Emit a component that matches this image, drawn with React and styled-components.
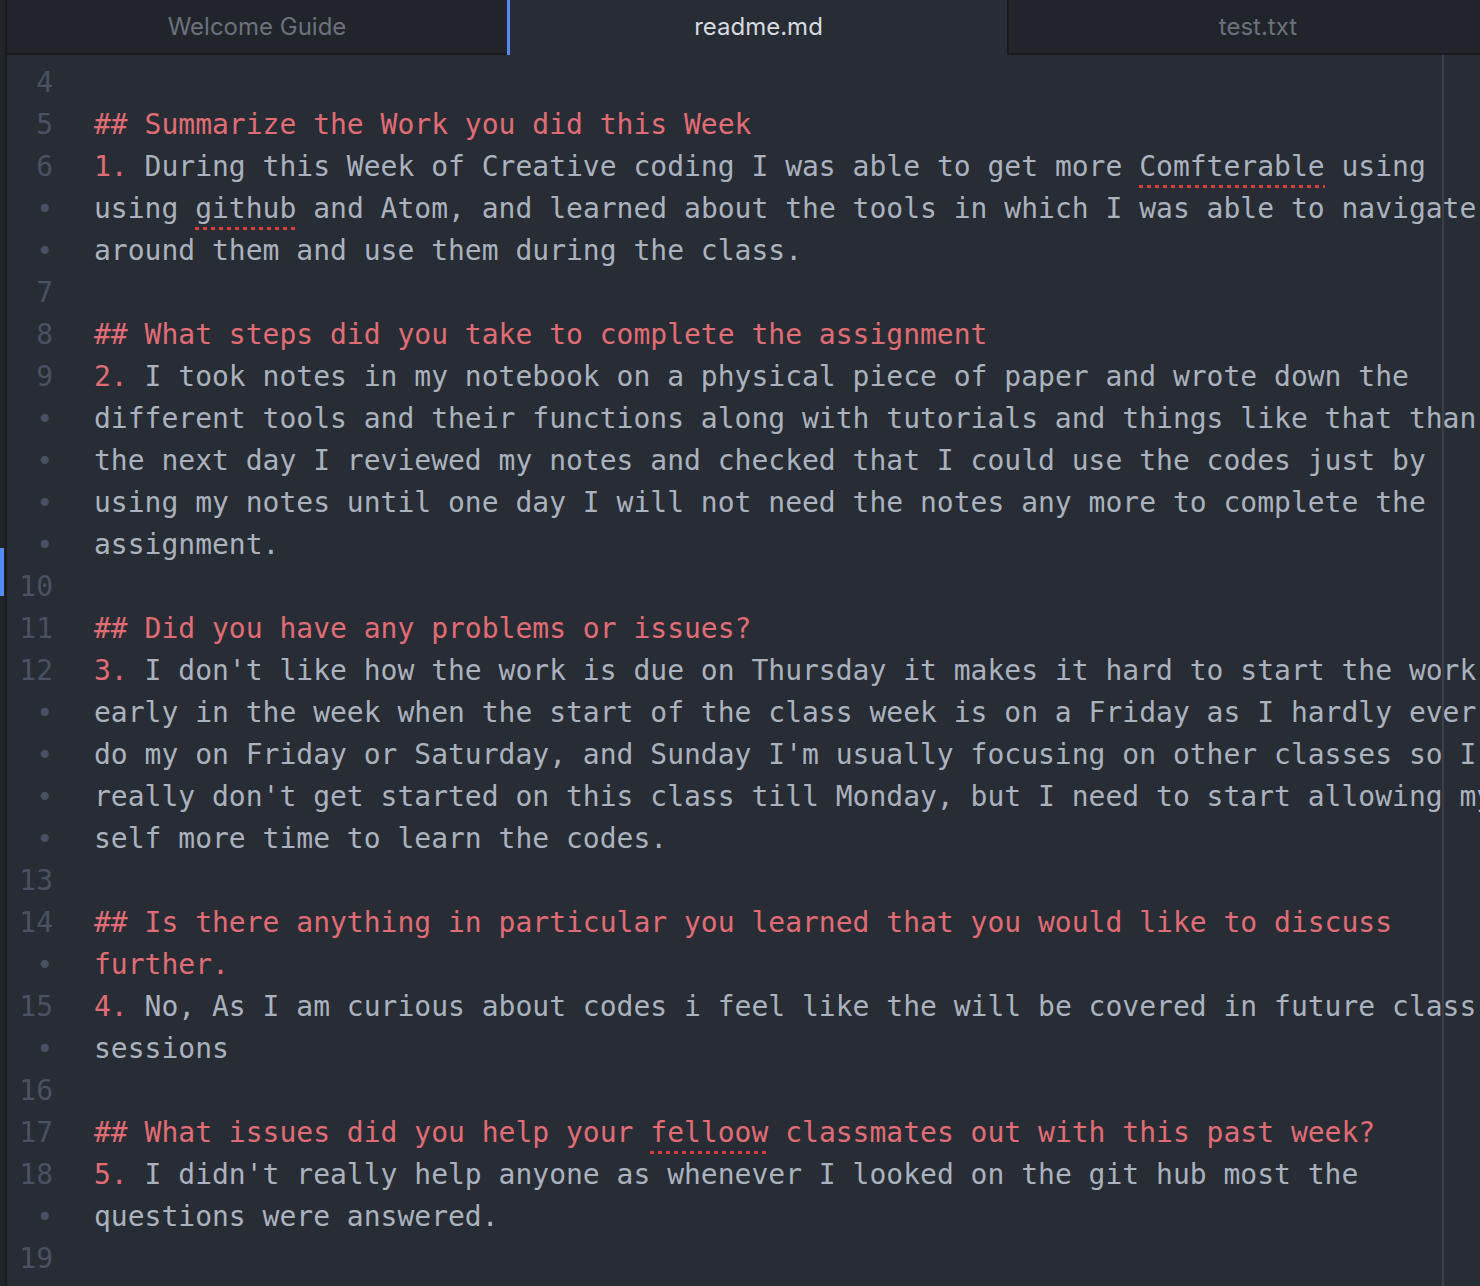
import React from "react";
import styled, { createGlobalStyle } from "styled-components";

const GlobalStyle = createGlobalStyle`
  html, body {
    margin: 0;
    padding: 0;
    background: #282c34;
    overflow: hidden;
  }
`;

const Window = styled.div`
  display: flex;
  width: 1480px;
  height: 1286px;
  overflow: hidden;
  background: #282c34;
`;

const LeftRail = styled.div`
  flex: 0 0 5px;
  display: flex;
  flex-direction: column;
  background: #21252b;
  border-right: 2px solid #181a1f;
`;

const RailMarker = styled.div`
  margin-top: 548px;
  width: 4px;
  height: 48px;
  background: #568af2;
`;

const Main = styled.div`
  flex: 1;
  display: flex;
  flex-direction: column;
  min-width: 0;
  overflow: hidden;
`;

const TabBar = styled.div`
  flex: 0 0 55px;
  display: flex;
  background: #21252b;
`;

const Tab = styled.div`
  flex: 0 0 500px;
  box-sizing: border-box;
  display: flex;
  align-items: center;
  justify-content: center;
  padding-bottom: 3px;
  font-family: Inter, "Noto Sans", sans-serif;
  font-size: 24px;
  color: ${(p) => (p.$active ? "#d7dae0" : "#6b717d")};
  background: ${(p) => (p.$active ? "#282c34" : "#21252b")};
  border-left: ${(p) =>
    p.$active ? "3px solid #568af2" : p.$first ? "none" : "2px solid #181a1f"};
  box-shadow: ${(p) => (p.$active ? "none" : "inset 0 -2px 0 #181a1f")};
`;

const Editor = styled.div`
  position: relative;
  flex: 1;
  display: flex;
  padding-top: 7px;
  font-family: "DejaVu Sans Mono", "Liberation Mono", monospace;
  font-size: 28px;
  line-height: 42px;
  overflow: hidden;
`;

const Gutter = styled.div`
  flex: 0 0 46px;
  padding-right: 17px;
  display: flex;
  flex-direction: column;
  align-items: flex-end;
  color: #495162;
`;

const GutterCell = styled.div`
  height: 42px;
`;

const Lines = styled.div`
  flex: 1;
  padding-left: 24px;
  display: flex;
  flex-direction: column;
  white-space: pre;
  color: #abb2bf;
`;

const Row = styled.div`
  height: 42px;
`;

const Red = styled.span`
  color: #e06c75;
`;

const Misspelled = styled.span`
  display: inline-block;
  background-image: repeating-linear-gradient(
    90deg,
    #d93b3b 0 4px,
    transparent 4px 8px
  );
  background-size: 100% 3px;
  background-position: 0 39px;
  background-repeat: no-repeat;
`;

const WrapGuide = styled.div`
  position: absolute;
  top: 0;
  bottom: 0;
  left: 1435px;
  width: 2px;
  background: #3a3f4b;
`;

// each entry: [gutter label, content]
const rows = [
  ["4", ""],
  ["5", <Red>## Summarize the Work you did this Week</Red>],
  [
    "6",
    <>
      <Red>1.</Red> During this Week of Creative coding I was able to get more{" "}
      <Misspelled>Comfterable</Misspelled> using
    </>,
  ],
  [
    "•",
    <>
      using <Misspelled>github</Misspelled> and Atom, and learned about the tools in which I was able to navigate
    </>,
  ],
  ["•", "around them and use them during the class."],
  ["7", ""],
  ["8", <Red>## What steps did you take to complete the assignment</Red>],
  [
    "9",
    <>
      <Red>2.</Red> I took notes in my notebook on a physical piece of paper and wrote down the
    </>,
  ],
  ["•", "different tools and their functions along with tutorials and things like that than"],
  ["•", "the next day I reviewed my notes and checked that I could use the codes just by"],
  ["•", "using my notes until one day I will not need the notes any more to complete the"],
  ["•", "assignment."],
  ["10", ""],
  ["11", <Red>## Did you have any problems or issues?</Red>],
  [
    "12",
    <>
      <Red>3.</Red> I don't like how the work is due on Thursday it makes it hard to start the work
    </>,
  ],
  ["•", "early in the week when the start of the class week is on a Friday as I hardly ever"],
  ["•", "do my on Friday or Saturday, and Sunday I'm usually focusing on other classes so I"],
  ["•", "really don't get started on this class till Monday, but I need to start allowing my"],
  ["•", "self more time to learn the codes."],
  ["13", ""],
  ["14", <Red>## Is there anything in particular you learned that you would like to discuss</Red>],
  ["•", <Red>further.</Red>],
  [
    "15",
    <>
      <Red>4.</Red> No, As I am curious about codes i feel like the will be covered in future class
    </>,
  ],
  ["•", "sessions"],
  ["16", ""],
  [
    "17",
    <Red>
      ## What issues did you help your <Misspelled>felloow</Misspelled> classmates out with this past week?
    </Red>,
  ],
  [
    "18",
    <>
      <Red>5.</Red> I didn't really help anyone as whenever I looked on the git hub most the
    </>,
  ],
  ["•", "questions were answered."],
  ["19", ""],
];

export default function App() {
  return (
    <>
      <GlobalStyle />
      <Window>
        <LeftRail>
          <RailMarker />
        </LeftRail>
        <Main>
          <TabBar>
            <Tab $first>Welcome Guide</Tab>
            <Tab $active>readme.md</Tab>
            <Tab>test.txt</Tab>
          </TabBar>
          <Editor>
            <Gutter>
              {rows.map(([label], i) => (
                <GutterCell key={i}>{label}</GutterCell>
              ))}
            </Gutter>
            <Lines>
              {rows.map(([, content], i) => (
                <Row key={i}>{content}</Row>
              ))}
            </Lines>
            <WrapGuide />
          </Editor>
        </Main>
      </Window>
    </>
  );
}
